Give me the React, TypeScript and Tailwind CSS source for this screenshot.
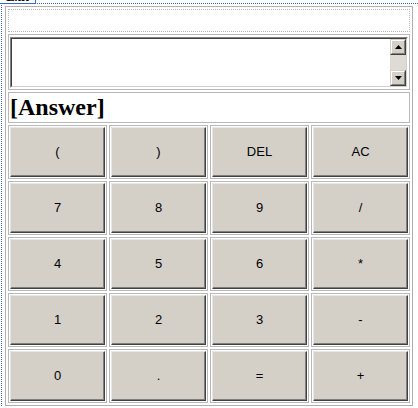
const keys = ['(', ')', 'DEL', 'AC', '7', '8', '9', '/', '4', '5', '6', '*', '1', '2', '3', '-', '0', '.', '=', '+']

function ScrollArrow({ up }: { up?: boolean }) {
  return (
    <div className="h-[16px] w-[16px] border border-t-[#d4d0c8] border-l-[#d4d0c8] border-r-[#404040] border-b-[#404040] bg-[#d4d0c8]">
      <div className="flex h-full w-full items-center justify-center border border-t-white border-l-white border-r-[#808080] border-b-[#808080]">
        <svg width="7" height="4" viewBox="0 0 7 4" className="block">
          {up ? <polygon points="3.5,0 7,4 0,4" fill="#000" /> : <polygon points="0,0 7,0 3.5,4" fill="#000" />}
        </svg>
      </div>
    </div>
  )
}

export default function App() {
  return (
    <div className="relative h-[408px] w-[418px] overflow-hidden bg-white">
      {/* clipped label at the very top */}
      <div className="absolute left-0 top-0 z-10 h-[4px] w-[36px] overflow-hidden border-b border-r border-[#3a66c4] bg-white">
        <div className="-mt-[10px] pl-[6px] font-['Liberation_Serif',serif] text-[13px] font-bold leading-[13px] text-black">Exit</div>
      </div>

      <div className="ml-[1px] mt-[3px] border-l border-t border-dotted border-[#3a66c4] pl-[3px] pt-[2px]">
        <div className="flex w-[408px] flex-col gap-[2px] border border-[#b0b0b0] p-[2px]">
          {/* input row */}
          <div className="h-[23px] border border-dotted border-[#b4b4b4]" />

          {/* textarea */}
          <div className="h-[56px] border border-[#b8b8b8] px-[1px] pt-[2px]">
            <div className="h-[51px] w-full border border-t-[#808080] border-l-[#808080] border-r-white border-b-white">
              <div className="flex h-full w-full border border-t-[#404040] border-l-[#404040] border-r-[#d4d0c8] border-b-[#d4d0c8] bg-white">
                <div className="flex-1" />
                <div className="flex w-[16px] flex-col">
                  <ScrollArrow up />
                  <div className="flex-1 bg-[#dedbd4]" />
                  <ScrollArrow />
                </div>
              </div>
            </div>
          </div>

          {/* answer */}
          <div className="flex h-[31px] items-center border border-[#b8b8b8] px-[1px]">
            <span className="font-['Liberation_Serif',serif] text-[24px] font-bold leading-[27px] text-black">[Answer]</span>
          </div>

          {/* keypad */}
          <div className="grid grid-cols-4 gap-[2px]">
            {keys.map((k) => (
              <div key={k} className="h-[54px] border border-[#b8b8b8] p-[1px]">
                <button className="h-full w-full border border-t-[#e6e6e6] border-l-[#e6e6e6] border-r-[#404040] border-b-[#404040] bg-[#d4d0c8] shadow-[inset_-1px_-1px_0_#808080] font-['Liberation_Sans',Arial,sans-serif] text-[13px] text-black">
                  {k}
                </button>
              </div>
            ))}
          </div>
        </div>
      </div>
    </div>
  )
}
